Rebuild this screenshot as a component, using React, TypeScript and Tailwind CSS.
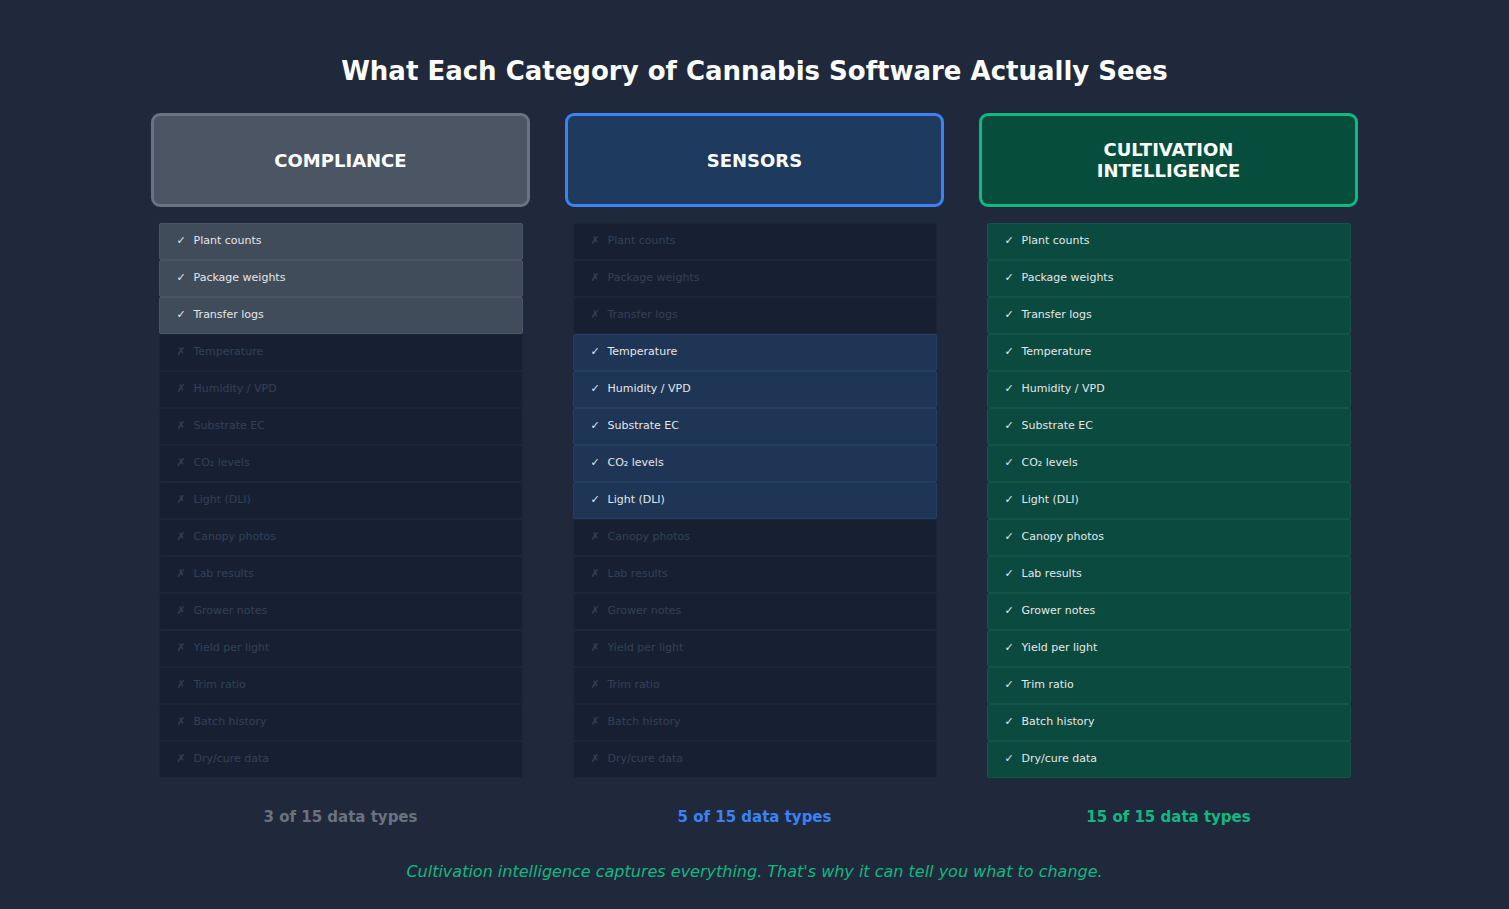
const items = ["Plant counts","Package weights","Transfer logs","Temperature","Humidity / VPD","Substrate EC","CO₂ levels","Light (DLI)","Canopy photos","Lab results","Grower notes","Yield per light","Trim ratio","Batch history","Dry/cure data"];

const cols = [
  { title: ["COMPLIANCE"], head: "bg-[#4b5563] border-[#6b7280]", on: "bg-[#414c5a] border-[#4b5563]", has: (i:number)=>i<3, count: "3 of 15 data types", cc: "text-[#6b7280]" },
  { title: ["SENSORS"], head: "bg-[#1e3a5f] border-[#3b82f6]", on: "bg-[#1e3556] border-[#253f63]", has: (i:number)=>i>=3&&i<8, count: "5 of 15 data types", cc: "text-[#3b82f6]" },
  { title: ["CULTIVATION","INTELLIGENCE"], head: "bg-[#064e3b] border-[#10b981]", on: "bg-[#0b4a3e] border-[#125446]", has: ()=>true, count: "15 of 15 data types", cc: "text-[#10b981]" },
];

export default function App() {
  return (
    <div className="w-[1509px] h-[909px] bg-[#1f293b] flex flex-col items-center" style={{fontFamily:'"DejaVu Sans", sans-serif'}}>
      <h1 className="mt-[55px] text-[26px] font-bold text-white leading-[32px]">What Each Category of Cannabis Software Actually Sees</h1>
      <div className="mt-[26px] flex gap-[35px]">
        {cols.map((c,ci)=>(
          <div key={ci} className="w-[379px] flex flex-col items-center">
            <div className={`w-full h-[94px] rounded-[9px] border-[3px] ${c.head} flex flex-col items-center justify-center text-white font-bold text-[18px] leading-[21px]`}>
              {c.title.map(t=><div key={t}>{t}</div>)}
            </div>
            <div className="mt-[16px] w-[364px] flex flex-col">
              {items.map((it,i)=>{
                const on = c.has(i);
                return (
                  <div key={it} className={`h-[37px] flex items-center pl-[17px] border rounded-[2px] text-[11px] ${on ? c.on+" text-[#e5e7eb]" : "bg-[#172033] border-[#1c2638] text-[#334155]"}`}>
                    <span className="w-[17px]">{on?"✓":"✗"}</span>{it}
                  </div>
                );
              })}
            </div>
            <div className={`mt-[28px] text-[15px] font-bold ${c.cc}`}>{c.count}</div>
          </div>
        ))}
      </div>
      <div className="mt-[31px] text-[16px] italic text-[#10b981]">Cultivation intelligence captures everything. That's why it can tell you what to change.</div>
    </div>
  );
}
